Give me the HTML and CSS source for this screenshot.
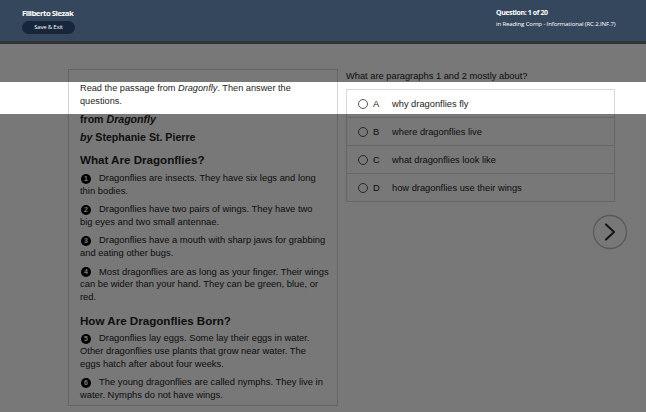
FILE: index.html
```
<!DOCTYPE html>
<html>
<head>
<meta charset="utf-8">
<link rel="stylesheet" href="styles.css">
</head>
<body>
<header class="top">
  <div class="student">
    <div class="name">Filiberto Slezak</div>
    <div class="save">Save &amp; Exit</div>
  </div>
  <div class="qinfo">
    <div class="qnum">Question: 1 of 20</div>
    <div class="qsub">in Reading Comp - Informational (RC.2.INF.7)</div>
  </div>
</header>
<div class="shadow"></div>
<main class="main">
  <section class="passage">
    <p class="intro">Read the passage from <i>Dragonfly</i>. Then answer the questions.</p>
    <p class="title">from <i>Dragonfly</i></p>
    <p class="author"><i>by</i> Stephanie St. Pierre</p>
    <h2 class="head">What Are Dragonflies?</h2>
    <div class="para"><span class="num">1</span><p class="ptext">Dragonflies are insects. They have six legs and long thin bodies.</p></div>
    <div class="para"><span class="num">2</span><p class="ptext">Dragonflies have two pairs of wings. They have two<br>big eyes and two small antennae.</p></div>
    <div class="para"><span class="num">3</span><p class="ptext">Dragonflies have a mouth with sharp jaws for grabbing and eating other bugs.</p></div>
    <div class="para"><span class="num">4</span><p class="ptext">Most dragonflies are as long as your finger. Their wings can be wider than your hand. They can be green, blue, or red.</p></div>
    <h2 class="head head2">How Are Dragonflies Born?</h2>
    <div class="para"><span class="num">5</span><p class="ptext">Dragonflies lay eggs. Some lay their eggs in water. Other dragonflies use plants that grow near water. The<br>eggs hatch after about four weeks.</p></div>
    <div class="para"><span class="num">6</span><p class="ptext">The young dragonflies are called nymphs. They live in water. Nymphs do not have wings.</p></div>
  </section>
  <section class="question">
    <p class="stem">What are paragraphs 1 and 2 mostly about?</p>
    <div class="options">
      <div class="opt"><span class="radio"></span><span class="letter">A</span><span class="otext">why dragonflies fly</span></div>
      <div class="opt"><span class="radio"></span><span class="letter">B</span><span class="otext">where dragonflies live</span></div>
      <div class="opt"><span class="radio"></span><span class="letter">C</span><span class="otext">what dragonflies look like</span></div>
      <div class="opt"><span class="radio"></span><span class="letter">D</span><span class="otext">how dragonflies use their wings</span></div>
    </div>
    <div class="next">
      <svg width="36" height="36" viewBox="0 0 36 36"><circle cx="18" cy="18" r="16.5" fill="none" stroke="#bdbdbd" stroke-width="1.3"/><path d="M14 10.5 L22 18 L14 25.5" fill="none" stroke="#333" stroke-width="2.2" stroke-linecap="round" stroke-linejoin="round"/></svg>
    </div>
  </section>
</main>
<div class="dim dim-top"></div>
<div class="dim dim-bottom"></div>
</body>
</html>
```
FILE: styles.css
```
html, body {
  margin: 0;
  padding: 0;
}
body {
  width: 646px;
  height: 412px;
  overflow: hidden;
  background: #ffffff;
  font-family: "Liberation Sans", Arial, sans-serif;
  color: #222;
  position: relative;
}
.top {
  height: 41px;
  background: #34475c;
  display: flex;
  justify-content: space-between;
  padding: 0 26px 0 22px;
  box-sizing: border-box;
  color: #fff;
}
.student {
  padding-top: 8px;
}
.name {
  font-family: "Open Sans", sans-serif;
  font-weight: 700;
  font-size: 7.8px;
  letter-spacing: -0.5px;
  line-height: 11px;
}
.save {
  margin-top: 2px;
  width: 53px;
  height: 13px;
  border-radius: 7px;
  background: #17263a;
  font-family: "Open Sans", sans-serif;
  font-size: 6px;
  letter-spacing: -0.2px;
  line-height: 13px;
  text-align: center;
}
.qinfo {
  width: 124px;
  padding-top: 8px;
}
.qnum {
  font-family: "Open Sans", sans-serif;
  font-weight: 700;
  font-size: 7px;
  letter-spacing: -0.4px;
  line-height: 10px;
}
.qsub {
  font-family: "Open Sans", sans-serif;
  font-size: 6.1px;
  letter-spacing: -0.15px;
  line-height: 10px;
  margin-top: 1px;
  white-space: nowrap;
}
.shadow {
  height: 3px;
  background: #6e6e6e;
}
.main {
  display: flex;
  gap: 8px;
  padding: 25px 0 0 68px;
}
.passage {
  width: 270px;
  height: 337px;
  box-sizing: border-box;
  border: 1px solid #d4d4d4;
  padding: 12px 8px 0 11px;
  overflow: hidden;
}
.passage p, .passage h2 {
  margin: 0;
}
.intro {
  font-size: 9.2px;
  line-height: 13px;
  color: #1e1e1e;
}
.title, .author {
  font-weight: 700;
  font-size: 10.6px;
  line-height: 14px;
  margin-top: 4px !important;
}
.head {
  font-size: 11.6px;
  font-weight: 700;
  line-height: 15px;
  margin-top: 8px !important;
  margin-bottom: 5px !important;
}
.head2 {
  margin-top: 10px !important;
  margin-bottom: 4px !important;
}
.para {
  position: relative;
  margin-bottom: 6px;
}
.ptext {
  font-size: 9.4px;
  line-height: 12.6px;
  text-indent: 19px;
}
.num {
  position: absolute;
  left: 1px;
  top: 1.5px;
  width: 10px;
  height: 10px;
  border-radius: 50%;
  background: #000;
  color: #fff;
  font-size: 7px;
  font-weight: 700;
  line-height: 10px;
  text-align: center;
}
.question {
  display: flex;
  flex-direction: column;
  width: 282px;
}
.stem {
  margin: 0;
  font-size: 9.3px;
  line-height: 12px;
  color: #222;
  padding-top: 1px;
}
.options {
  margin-top: 7px;
  width: 269px;
  box-sizing: border-box;
  border: 1px solid #d8d8d8;
}
.opt {
  height: 28px;
  display: flex;
  align-items: center;
  font-size: 9.3px;
  color: #222;
  border-top: 1px solid #d8d8d8;
  box-sizing: border-box;
}
.opt:first-child {
  border-top: none;
  height: 27px;
}
.radio {
  width: 8px;
  height: 8px;
  border: 1px solid #555;
  border-radius: 50%;
  margin-left: 11px;
}
.letter {
  margin-left: 5px;
  width: 19px;
}
.next {
  align-self: flex-end;
  margin-top: 12px;
  width: 36px;
  height: 36px;
}
.dim {
  position: absolute;
  left: 0;
  width: 646px;
  background: rgba(0, 0, 0, 0.53);
}
.dim-top {
  top: 41px;
  height: 41px;
}
.dim-bottom {
  top: 114px;
  height: 298px;
}
```
